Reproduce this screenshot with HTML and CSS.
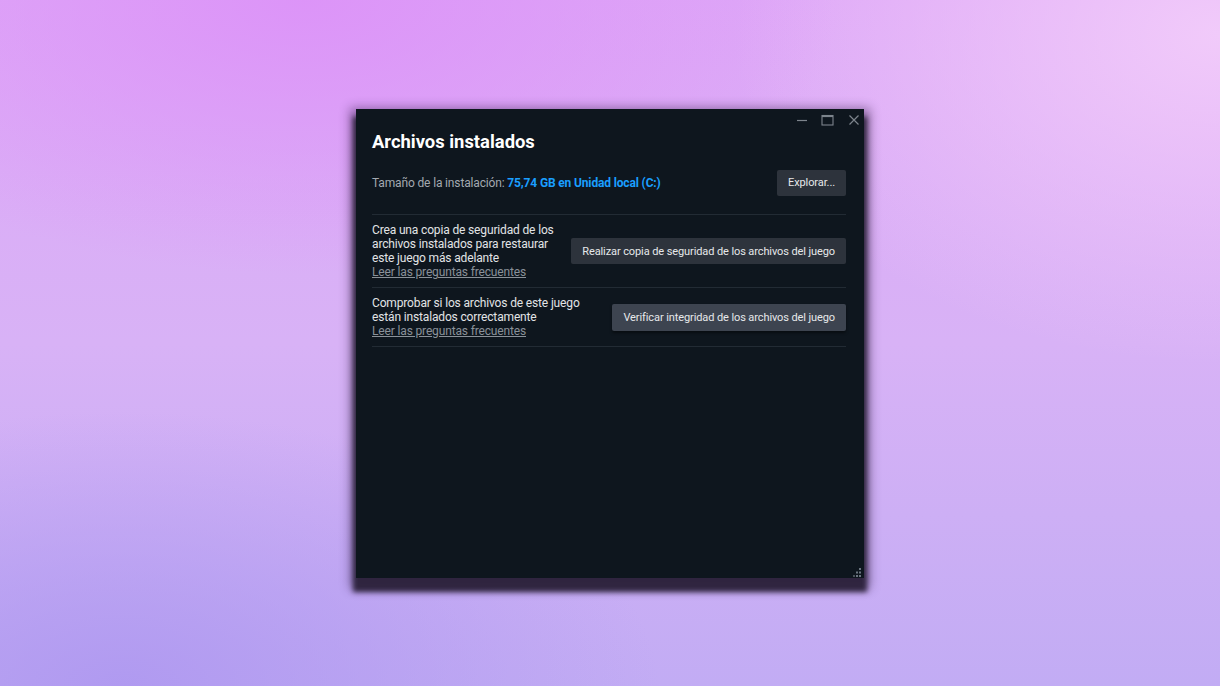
FILE: index.html
```html
<!DOCTYPE html>
<html lang="es">
<head>
<meta charset="utf-8">
<title>Archivos instalados</title>
<link rel="stylesheet" href="styles.css">
</head>
<body>
<div class="window">
  <div class="titlebar">
    <span class="ctl ctl-min"><svg width="12" height="12" viewBox="0 0 12 12"><line x1="1" y1="6.5" x2="11" y2="6.5" stroke="#7d848c" stroke-width="1.2"/></svg></span>
    <span class="ctl ctl-max"><svg width="13" height="12" viewBox="0 0 13 12"><rect x="1" y="1.5" width="11" height="9.5" fill="none" stroke="#7d848c" stroke-width="1.1"/><line x1="1" y1="2.3" x2="12" y2="2.3" stroke="#7d848c" stroke-width="1.6"/></svg></span>
    <span class="ctl ctl-close"><svg width="12" height="12" viewBox="0 0 12 12"><path d="M1.5 1.5 L10.5 10.5 M10.5 1.5 L1.5 10.5" stroke="#7d848c" stroke-width="1.2" fill="none"/></svg></span>
  </div>
  <div class="content">
    <h1 class="title">Archivos instalados</h1>
    <div class="size-row">
      <div class="size-text">Tamaño de la instalación: <span class="size-value">75,74 GB en Unidad local (C:)</span></div>
      <button class="btn">Explorar...</button>
    </div>
    <div class="section">
      <div class="desc">
        <div>Crea una copia de seguridad de los<br>archivos instalados para restaurar<br>este juego más adelante</div>
        <a class="faq" href="#">Leer las preguntas frecuentes</a>
      </div>
      <button class="btn">Realizar copia de seguridad de los archivos del juego</button>
    </div>
    <div class="section section-last">
      <div class="desc">
        <div>Comprobar si los archivos de este juego<br>están instalados correctamente</div>
        <a class="faq" href="#">Leer las preguntas frecuentes</a>
      </div>
      <button class="btn btn-hover">Verificar integridad de los archivos del juego</button>
    </div>
  </div>
  <div class="grip">
    <svg width="10" height="10" viewBox="0 0 10 10">
      <rect x="7" y="0" width="2" height="2" fill="#6b7580"/>
      <rect x="4" y="3.5" width="2" height="2" fill="#6b7580"/>
      <rect x="7" y="3.5" width="2" height="2" fill="#6b7580"/>
      <rect x="1" y="7" width="2" height="2" fill="#4a525b"/>
      <rect x="4" y="7" width="2" height="2" fill="#6b7580"/>
      <rect x="7" y="7" width="2" height="2" fill="#6b7580"/>
    </svg>
  </div>
</div>
</body>
</html>
```

FILE: styles.css
```css
* { box-sizing: border-box; }
html, body { margin: 0; padding: 0; }
body {
  width: 1220px;
  height: 686px;
  overflow: hidden;
  display: flex;
  align-items: center;
  justify-content: center;
  font-family: Roboto, "Noto Sans", sans-serif;
  background:
    radial-gradient(ellipse 55% 50% at 25% 0%, rgba(220,146,248,0.9), rgba(220,146,248,0) 80%),
    radial-gradient(ellipse 50% 60% at 100% 5%, rgba(242,204,250,0.95), rgba(242,204,250,0) 80%),
    radial-gradient(ellipse 55% 50% at 10% 100%, rgba(174,152,240,0.9), rgba(174,152,240,0) 80%),
    linear-gradient(180deg, #dea8f7 0%, #d8b2f6 50%, #c2acf4 100%);
}
.window {
  position: relative;
  width: 508px;
  height: 469px;
  background: #0e161e;
  display: flex;
  flex-direction: column;
  box-shadow:
    0 11px 5px 3px rgba(40, 30, 54, 0.92),
    0 5px 10px 6px rgba(40, 20, 60, 0.45);
}
.titlebar {
  height: 22px;
  display: flex;
  justify-content: flex-end;
  align-items: center;
  gap: 13px;
  padding-right: 4px;
}
.ctl { display: flex; width: 13px; height: 12px; align-items: center; justify-content: center; }
.content {
  padding: 0 18px 0 16px;
}
.title {
  margin: 0;
  font-size: 18.4px;
  line-height: 22px;
  font-weight: 700;
  color: #ffffff;
}
.size-row {
  margin-top: 17px;
  padding-bottom: 18px;
  display: flex;
  align-items: center;
  justify-content: space-between;
  font-size: 12px;
  letter-spacing: -0.15px;
}
.size-text { color: #a3a9b0; white-space: nowrap; }
.size-value { color: #1a9fff; font-weight: 700; }
.btn {
  font-family: inherit;
  font-size: 11px;
  letter-spacing: -0.1px;
  color: #e6e8ea;
  background: #2d333c;
  border: none;
  border-radius: 2px;
  height: 26px;
  padding: 0 11px;
  white-space: nowrap;
  flex-shrink: 0;
  cursor: pointer;
}
.btn-hover {
  background: #3d4450;
  height: 27px;
  box-shadow: 0 2px 3px rgba(0,0,0,0.45);
}
.section {
  border-top: 1px solid #222b34;
  display: flex;
  align-items: center;
  justify-content: space-between;
  padding: 8px 0 7px;
  font-size: 12px;
  letter-spacing: -0.15px;
  line-height: 14.3px;
  color: #e2e4e6;
}
.desc { white-space: nowrap; }
.section-last { border-bottom: 1px solid #222b34; }
.faq {
  color: #8a9199;
  text-decoration: underline;
  display: block;
}
.grip {
  position: absolute;
  right: 2px;
  bottom: 0px;
  width: 10px;
  height: 10px;
  display: flex;
}
```
